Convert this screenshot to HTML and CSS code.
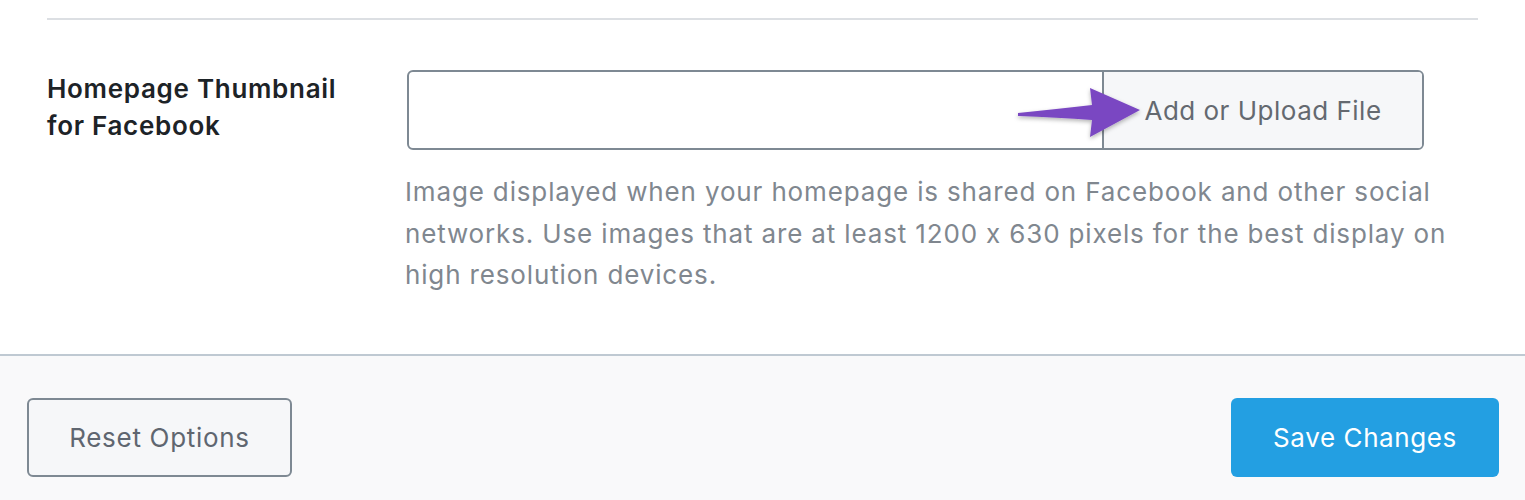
FILE: index.html
```html
<!DOCTYPE html>
<html lang="en">
<head>
    <meta charset="UTF-8">
    <meta name="viewport" content="width=device-width, initial-scale=1.0">
    <title>Homepage Thumbnail</title>
    <link rel="stylesheet" href="styles.css">
</head>
<body>
    <div class="options-panel">
        <div class="panel-divider"></div>

        <!-- Homepage thumbnail field -->
        <div class="field-row">
            <label class="field-label" for="thumbInput">Homepage Thumbnail for Facebook</label>
            <div class="field-control">
                <div class="upload-group">
                    <input type="text" id="thumbInput" class="upload-input">
                    <button class="upload-button">Add or Upload File</button>
                    <svg class="pointer-arrow" width="130" height="60" viewBox="0 0 130 60">
                        <defs>
                            <filter id="arrowShadow" x="-10%" y="-20%" width="120%" height="160%">
                                <feDropShadow dx="0" dy="2" stdDeviation="2" flood-color="#000" flood-opacity="0.3"/>
                            </filter>
                        </defs>
                        <path d="M4 29 C30 26, 55 24, 78 21 L76 4 L126 26 L76 53 L78 36 C55 34, 30 33, 4 32 Z" fill="#7a47c2" filter="url(#arrowShadow)"/>
                    </svg>
                </div>
                <p class="field-description">Image displayed when your homepage is shared on Facebook and other social networks. Use images that are at least 1200 x 630 pixels for the best display on high resolution devices.</p>
            </div>
        </div>
    </div>

    <div class="options-footer">
        <button class="reset-button">Reset Options</button>
        <button class="save-button">Save Changes</button>
    </div>
</body>
</html>
```

FILE: styles.css
```css
body {
    font-family: Inter, "Noto Sans", sans-serif;
    font-feature-settings: "calt" 0;
    margin: 0;
    padding: 0;
    background-color: #fff;
    color: #1d2327;
}
.options-panel {
    padding: 18px 47px 0 47px;
}
.panel-divider {
    border-top: 2px solid #dcdfe3;
}
/* Field row */
.field-row {
    display: grid;
    grid-template-columns: 360px 1fr;
    padding-top: 50px;
    padding-bottom: 58px;
}
.field-label {
    font-size: 26px;
    font-weight: 600;
    line-height: 37px;
    letter-spacing: 0.7px;
    padding-right: 40px;
}
.upload-group {
    position: relative;
    display: flex;
    width: 1017px;
    height: 80px;
    border: 2px solid #7e8993;
    border-radius: 6px;
    box-sizing: border-box;
}
.upload-input {
    flex: 1;
    border: none;
    border-radius: 6px 0 0 6px;
    background: #fff;
    outline: none;
    font-size: 26px;
}
.upload-button {
    width: 320px;
    border: none;
    border-left: 2px solid #7e8993;
    border-radius: 0 4px 4px 0;
    background-color: #f6f7f9;
    color: #646970;
    font-family: inherit;
    font-size: 26px;
    letter-spacing: 0.5px;
    cursor: pointer;
}
.pointer-arrow {
    position: absolute;
    left: 605px;
    top: 12px;
}
.field-description {
    margin: 21px 0 0 -2px;
    font-size: 26px;
    line-height: 41.5px;
    letter-spacing: 0.85px;
    color: #80878f;
}
/* Footer */
.options-footer {
    display: flex;
    justify-content: space-between;
    align-items: center;
    padding: 42px 26px 60px 27px;
    border-top: 2px solid #bfc9d2;
    background-color: #f9f9fa;
}
.reset-button {
    width: 265px;
    height: 79px;
    border: 2px solid #7e8993;
    border-radius: 6px;
    background-color: #f6f7f9;
    color: #5f6670;
    font-family: inherit;
    font-size: 26px;
    letter-spacing: 0.7px;
    cursor: pointer;
}
.save-button {
    width: 268px;
    height: 79px;
    border: none;
    border-radius: 6px;
    background-color: #239fe2;
    color: #fff;
    font-family: inherit;
    font-size: 26px;
    letter-spacing: 0.6px;
    cursor: pointer;
}
```
